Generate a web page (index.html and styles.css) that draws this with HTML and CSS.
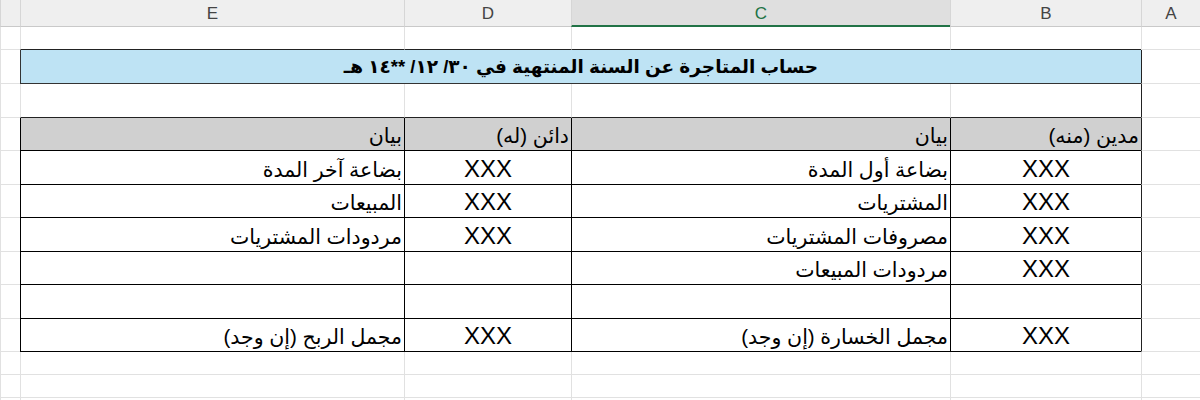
FILE: index.html
```html
<!DOCTYPE html>
<html lang="ar" dir="rtl">
<head>
<meta charset="utf-8">
<title>حساب المتاجرة</title>
<link rel="stylesheet" href="styles.css">
</head>
<body>
<div class="sheet">
  <div class="h">A</div>
  <div class="h">B</div>
  <div class="h sel">C</div>
  <div class="h">D</div>
  <div class="h">E</div>
  <div class="h"></div>

  <div class="g"></div>
  <div class="g k"></div>
  <div class="g k"></div>
  <div class="g k"></div>
  <div class="g k"></div>
  <div class="g"></div>

  <div class="g r"></div>
  <div class="title">حساب المتاجرة عن السنة المنتهية في ٣٠/ ١٢/ **١٤ هـ</div>
  <div class="g"></div>

  <div class="g r"></div>
  <div class="g k"></div>
  <div class="g k"></div>
  <div class="g k"></div>
  <div class="g k"></div>
  <div class="g"></div>

  <div class="g r"></div>
  <div class="t th">مدين (منه)</div>
  <div class="t th">بيان</div>
  <div class="t th">دائن (له)</div>
  <div class="t th">بيان</div>
  <div class="g"></div>

  <div class="g r"></div>
  <div class="t num">XXX</div>
  <div class="t lbl">بضاعة أول المدة</div>
  <div class="t num">XXX</div>
  <div class="t lbl">بضاعة آخر المدة</div>
  <div class="g"></div>

  <div class="g r"></div>
  <div class="t num">XXX</div>
  <div class="t lbl">المشتريات</div>
  <div class="t num">XXX</div>
  <div class="t lbl">المبيعات</div>
  <div class="g"></div>

  <div class="g r"></div>
  <div class="t num">XXX</div>
  <div class="t lbl">مصروفات المشتريات</div>
  <div class="t num">XXX</div>
  <div class="t lbl">مردودات المشتريات</div>
  <div class="g"></div>

  <div class="g r"></div>
  <div class="t num">XXX</div>
  <div class="t lbl">مردودات المبيعات</div>
  <div class="t num"></div>
  <div class="t lbl"></div>
  <div class="g"></div>

  <div class="g r"></div>
  <div class="t num"></div>
  <div class="t lbl"></div>
  <div class="t num"></div>
  <div class="t lbl"></div>
  <div class="g"></div>

  <div class="g r"></div>
  <div class="t num">XXX</div>
  <div class="t lbl">مجمل الخسارة (إن وجد)</div>
  <div class="t num">XXX</div>
  <div class="t lbl">مجمل الربح (إن وجد)</div>
  <div class="g"></div>

  <div class="g"></div><div class="g"></div><div class="g"></div><div class="g"></div><div class="g"></div><div class="g"></div>
  <div class="g"></div><div class="g"></div><div class="g"></div><div class="g"></div><div class="g"></div><div class="g"></div>
  <div class="g"></div><div class="g"></div><div class="g"></div><div class="g"></div><div class="g"></div><div class="g"></div>
</div>
</body>
</html>
```

FILE: styles.css
```css
* { box-sizing: border-box; }
html, body { margin: 0; padding: 0; background: #fff; }
body { width: 1200px; height: 400px; overflow: hidden; }

.sheet {
  direction: rtl;
  display: grid;
  grid-template-columns: 59px 191px 379px 167px 384px 20px;
  grid-template-rows: 27px 23px 34px 34px 33px 34px 33px 34px 33px 34px 33px 23px 23px 22px;
  font-family: "Liberation Sans", "DejaVu Sans", sans-serif;
  color: #000;
}

.h {
  background: #efefef;
  border-left: 1px solid #d6d6d6;
  border-bottom: 1px solid #c9c9c9;
  color: #444;
  font-size: 17px;
  display: flex;
  align-items: center;
  justify-content: center;
  padding-top: 2px;
}
.h.sel {
  background: #dfdfdf;
  color: #217346;
  border-bottom: 2px solid #217346;
}

.g {
  border-left: 1px solid #e1e1e1;
  border-bottom: 1px solid #e1e1e1;
}
.g.k { border-bottom-color: #222; }
.g.r { border-left-color: #222; }

.title {
  grid-column: span 4;
  background: #bee3f4;
  border-left: 1px solid #333;
  border-bottom: 1px solid #333;
  font-weight: bold;
  font-size: 18.5px;
  display: flex;
  align-items: center;
  justify-content: center;
  padding-top: 1px;
}

.t {
  border-left: 1px solid #000;
  border-bottom: 1px solid #000;
  display: flex;
  align-items: flex-end;
  padding-bottom: 2px;
}
.th {
  background: #d0d0d0;
  font-size: 20.5px;
  justify-content: flex-start;
  padding-right: 2px;
}
.lbl {
  font-size: 20.5px;
  justify-content: flex-start;
  padding-right: 2px;
}
.num {
  font-size: 24px;
  justify-content: center;
  padding-bottom: 1px;
}
```
